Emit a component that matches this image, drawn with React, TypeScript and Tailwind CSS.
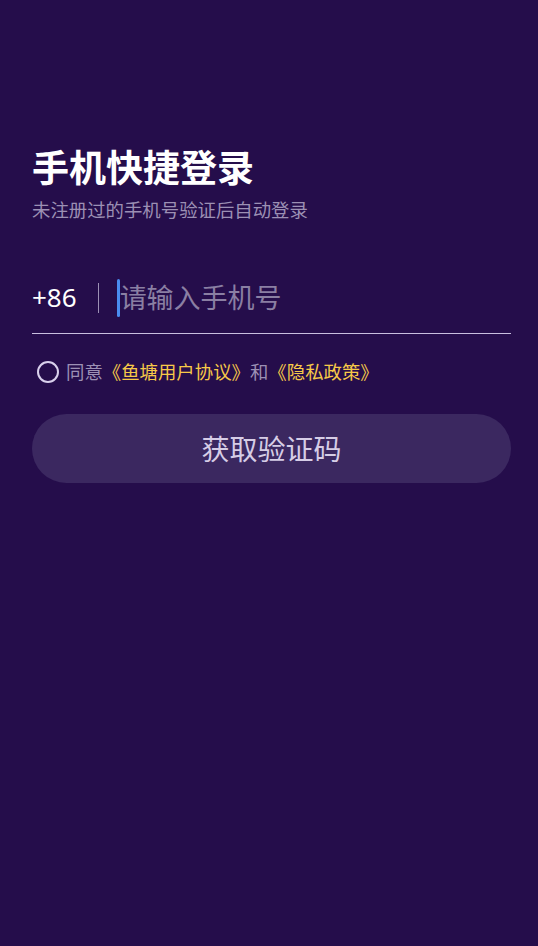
export default function App() {
  return (
    <div
      className="min-h-[946px] w-full bg-[#250d4b] pl-8 pr-[27px] pt-[142px]"
      style={{ fontFamily: '"Noto Sans CJK SC", "Noto Sans", sans-serif' }}
    >
      <h1 className="text-[37px] font-bold leading-[48px] text-white">手机快捷登录</h1>
      <p className="mt-[6px] text-[18.4px] leading-[26px] text-[#9c90b4]">未注册过的手机号验证后自动登录</p>

      <div className="mt-[50px] flex h-[62px] items-center border-b border-[#c9bfe0] pb-[10px]">
        <span className="text-[26px] text-white" style={{ fontFamily: '"Noto Sans", sans-serif' }}>+86</span>
        <span className="ml-[21px] h-[30px] w-px bg-[#9c90b4]" />
        <span className="ml-[18px] h-[38px] w-[3px] rounded-sm bg-[#4a8cf0]" />
        <span className="text-[27px] text-[#8a7fa3]">请输入手机号</span>
      </div>

      <div className="mt-[24px] flex items-center pl-[5px] text-[18.4px]">
        <span className="h-[22px] w-[22px] rounded-full border-2 border-[#d9d0ec]" />
        <span className="ml-[7px] text-[#9c90b4]">同意</span>
        <span className="text-[#f7c948]">《鱼塘用户协议》</span>
        <span className="text-[#9c90b4]">和</span>
        <span className="text-[#f7c948]">《隐私政策》</span>
      </div>

      <button className="mt-[28px] flex h-[69px] w-full items-center justify-center rounded-full bg-[#3b2860] text-[28px] text-[#d6cde6]">
        获取验证码
      </button>
    </div>
  );
}
